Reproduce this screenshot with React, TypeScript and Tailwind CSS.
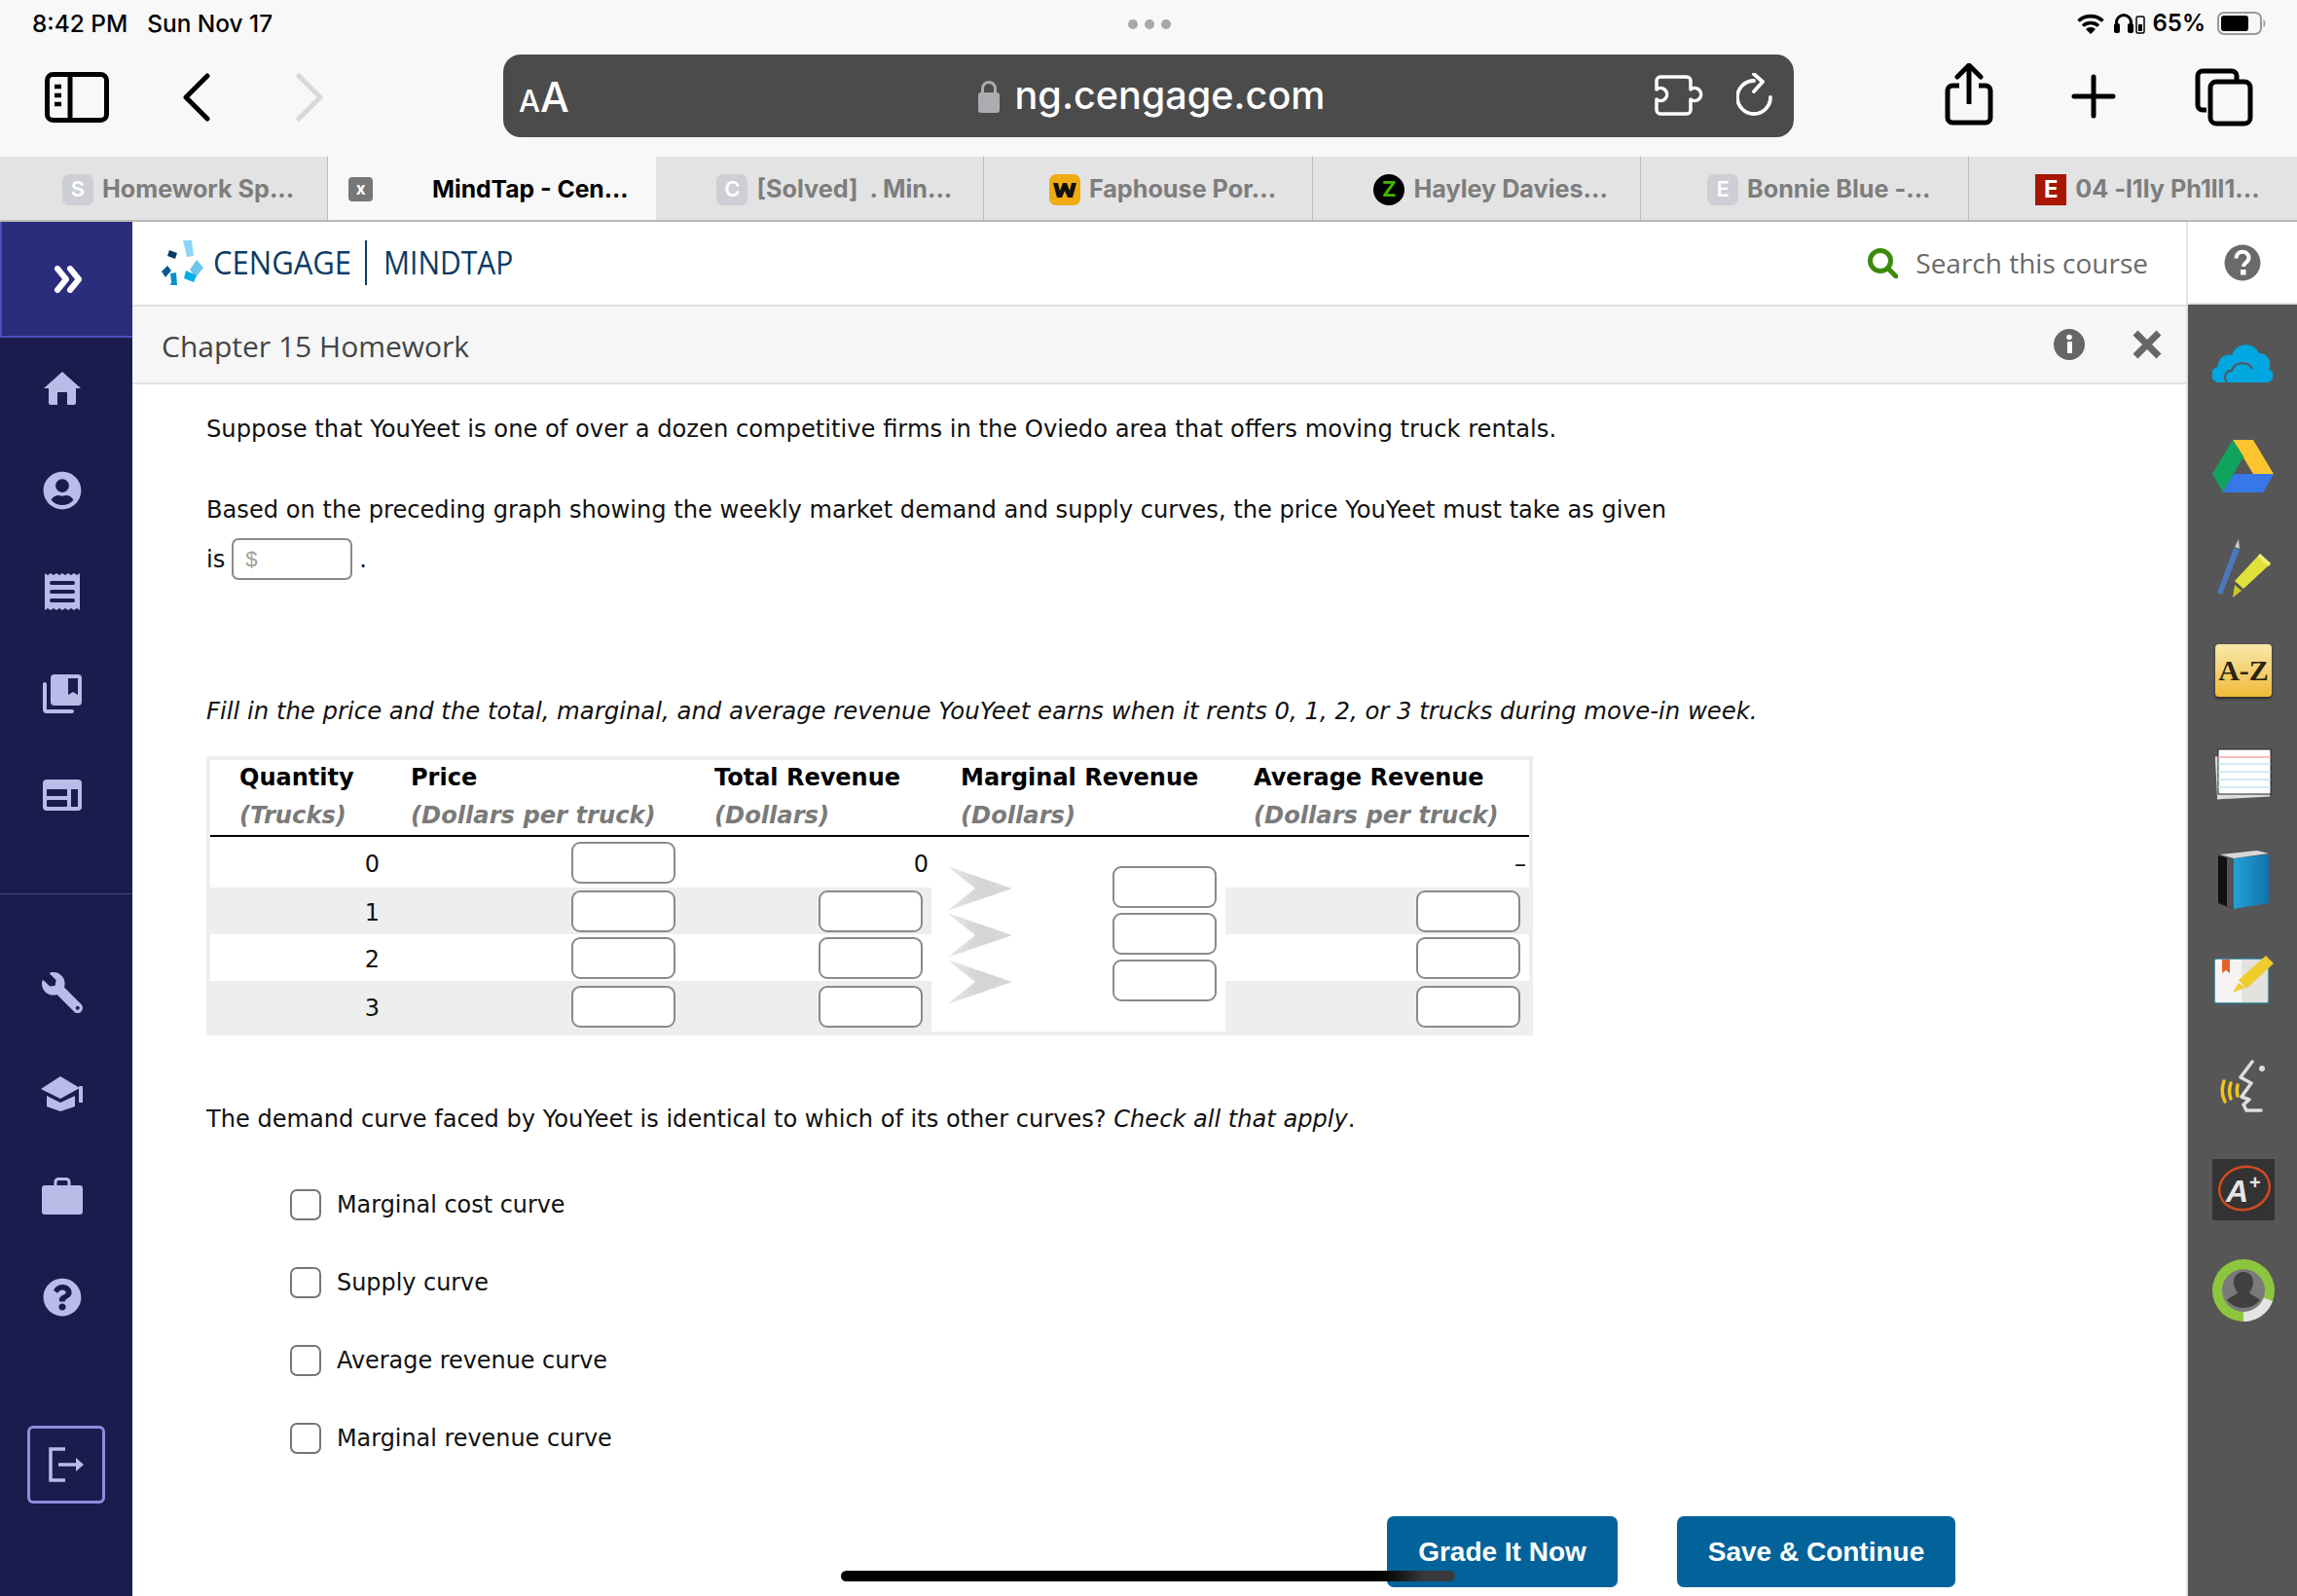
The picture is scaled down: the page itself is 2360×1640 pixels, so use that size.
import { FC, ReactNode } from 'react';
import { FaQuestionCircle, FaUserCircle, FaWrench } from 'react-icons/fa';

const tabs = [
  { title: 'Homework Sp...', letter: 'S', kind: 'plain' },
  { title: 'MindTap - Cen...', letter: '', kind: 'active' },
  { title: '[Solved]  . Min...', letter: 'C', kind: 'plain' },
  { title: 'Faphouse Por...', letter: '', kind: 'crown' },
  { title: 'Hayley Davies...', letter: 'Z', kind: 'zed' },
  { title: 'Bonnie Blue -...', letter: 'E', kind: 'plain' },
  { title: '04 -l1ly Ph1ll1...', letter: 'E', kind: 'red' },
];

const Favicon: FC<{ kind: string; letter: string }> = ({ kind, letter }) => {
  if (kind === 'crown') {
    return (
      <svg width="32" height="32" viewBox="0 0 32 32" className="shrink-0">
        <rect width="32" height="32" rx="7" fill="#eeab12" />
        <path d="M4 9h5l2 8 3-8h4l3 8 2-8h5l-4 15h-5l-3-7-3 7H8z" fill="#111" />
      </svg>
    );
  }
  if (kind === 'zed') {
    return <span className="w-[32px] h-[32px] rounded-full bg-black flex items-center justify-center text-[#45b300] text-[22px] font-bold shrink-0">{letter}</span>;
  }
  if (kind === 'red') {
    return <span className="w-[32px] h-[32px] bg-[#a81500] flex items-center justify-center text-white text-[24px] font-bold shrink-0">{letter}</span>;
  }
  return <span className="w-[32px] h-[32px] rounded-[7px] bg-[#cdced6] flex items-center justify-center text-white text-[22px] font-semibold shrink-0">{letter}</span>;
};

const TabBar: FC = () => (
  <div className="grid grid-cols-7 h-[67px] border-b-2 border-[#b8b8b8] font-['Inter',sans-serif] text-[25.2px] font-bold">
    {tabs.map((t) =>
      t.kind === 'active' ? (
        <div key={t.title} className="relative bg-[#f8f8f8] flex items-center justify-center text-black text-[24.7px] pl-[78px] pt-[2px]">
          <span className="absolute left-[21px] top-[21px] w-[25px] h-[25px] rounded-[4px] bg-[#777] text-white text-[17px] flex items-center justify-center">x</span>
          <span className="whitespace-pre">{t.title}</span>
        </div>
      ) : (
        <div key={t.title} className="bg-[#e3e3e3] border-r border-[#bcbcbc] last:border-r-0 flex items-center justify-center gap-[9px] pl-[30px] pt-[2px] text-[#7d7d7d]">
          <Favicon kind={t.kind} letter={t.letter} />
          <span className="whitespace-pre">{t.title}</span>
        </div>
      ),
    )}
  </div>
);

const StatusBar: FC = () => (
  <div className="relative h-[48px] flex items-center justify-between pl-[33px] pr-[31px] font-['Inter',sans-serif] text-[24.4px] font-medium text-black">
    <div className="flex gap-[20px]">
      <span>8:42 PM</span>
      <span>Sun Nov 17</span>
    </div>
    <div className="absolute left-[1159px] top-[20px] flex gap-[7px]">
      <span className="w-[10px] h-[10px] rounded-full bg-[#a8a8a8]" />
      <span className="w-[10px] h-[10px] rounded-full bg-[#a8a8a8]" />
      <span className="w-[10px] h-[10px] rounded-full bg-[#a8a8a8]" />
    </div>
    <div className="flex items-center">
      <svg width="28" height="21" viewBox="0 0 28 21" fill="none" stroke="#000" strokeWidth="3.600">
        <path d="M1.500 7.500c7-6.500 18-6.500 25 0M6 12.500c4.500-4 11.500-4 16 0" />
        <path d="M14 14a6 6 0 0 1 5 2l-5 5-5-5a6 6 0 0 1 5-2z" fill="#000" stroke="none" />
      </svg>
      <svg width="32" height="22" viewBox="0 0 32 22" fill="none" stroke="#000" className="ml-[10px]">
        <path d="M2.500 19V10a7.500 7.500 0 0 1 15 0v9" strokeWidth="3" />
        <rect x="0" y="11" width="6" height="10" rx="2" fill="#000" stroke="none" />
        <rect x="14" y="11" width="6" height="10" rx="2" fill="#000" stroke="none" />
        <rect x="23" y="4" width="8" height="17" rx="1.500" strokeWidth="1.500" />
        <rect x="25" y="12" width="4" height="7" fill="#000" stroke="none" />
      </svg>
      <span className="ml-[7px] font-semibold text-[24px]">65%</span>
      <svg width="51" height="24" viewBox="0 0 51 24" className="ml-[12px]">
        <rect x="1" y="1" width="44" height="22" rx="6" fill="none" stroke="#9a9a9a" strokeWidth="2" />
        <rect x="4" y="4" width="28" height="16" rx="3" fill="#000" />
        <path d="M47.500 8c2.500 1 2.500 7 0 8z" fill="#9a9a9a" />
      </svg>
    </div>
  </div>
);

const Toolbar: FC = () => (
  <div className="h-[113px] flex items-start">
    <div className="w-[517px] h-full relative">
      <svg width="66" height="52" viewBox="0 0 66 52" fill="none" stroke="#000" strokeWidth="5" className="absolute left-[46px] top-[26px]">
        <rect x="2.500" y="2.500" width="61" height="47" rx="6" />
        <path d="M26 3v46" />
        <path d="M10 15h7M10 24h7M10 33h7" strokeWidth="4.500" />
      </svg>
      <svg width="32" height="50" viewBox="0 0 32 50" fill="none" stroke="#000" strokeWidth="5" strokeLinecap="round" strokeLinejoin="round" className="absolute left-[186px] top-[27px]">
        <path d="M27 3L5 25l22 22" />
      </svg>
      <svg width="32" height="50" viewBox="0 0 32 50" fill="none" stroke="#d8d8d8" strokeWidth="5" strokeLinecap="round" strokeLinejoin="round" className="absolute left-[302px] top-[27px]">
        <path d="M5 3l22 22L5 47" />
      </svg>
    </div>
    <div className="relative mt-[8px] w-[1326px] h-[85px] rounded-[18px] bg-[#4b4b4b] text-white font-['Inter',sans-serif] flex items-center justify-center pl-[5px]">
      <span className="absolute left-[16px] top-[23px] font-medium leading-none flex items-baseline">
        <span className="text-[31px]">A</span>
        <span className="text-[42px]">A</span>
      </span>
      <svg width="24" height="34" viewBox="0 0 24 34" className="mr-[15px]">
        <rect x="1" y="13" width="22" height="21" rx="3" fill="#acacb0" />
        <path d="M5.500 14V9a6.500 6.500 0 0 1 13 0v5" fill="none" stroke="#acacb0" strokeWidth="3" />
      </svg>
      <span className="text-[39.6px] font-medium leading-none">ng.cengage.com</span>
      <svg width="54" height="42" viewBox="0 0 54 42" fill="none" stroke="#fff" strokeWidth="3.500" strokeLinejoin="round" className="absolute left-[1183px] top-[21px]">
        <path d="M6 2h27a4 4 0 0 1 4 4v9a6.500 6.500 0 1 1 0 10v11a4 4 0 0 1-4 4H6a4 4 0 0 1-4-4V25a6.500 6.500 0 1 0 0-10V6a4 4 0 0 1 4-4z" />
      </svg>
      <svg width="40" height="46" viewBox="0 0 40 46" fill="none" stroke="#fff" strokeWidth="3.800" strokeLinecap="round" strokeLinejoin="round" className="absolute left-[1267px] top-[19px]">
        <path d="M18 8A17 17 0 1 0 35 25" />
        <path d="M18 1l9 8-9 10" />
      </svg>
    </div>
    <div className="flex-1 h-full relative">
      <svg width="50" height="64" viewBox="0 0 50 64" fill="none" stroke="#000" strokeWidth="5" strokeLinejoin="round" className="absolute left-[155px] top-[17px]">
        <path d="M15 23H8a5 5 0 0 0-5 5v28a5 5 0 0 0 5 5h34a5 5 0 0 0 5-5V28a5 5 0 0 0-5-5h-7" />
        <path d="M25 42V4" />
        <path d="M13 14L25 2l12 12" strokeLinecap="round" />
      </svg>
      <svg width="46" height="46" viewBox="0 0 46 46" fill="none" stroke="#000" strokeWidth="5" strokeLinecap="round" className="absolute left-[285px] top-[28px]">
        <path d="M23 3v40M3 23h40" />
      </svg>
      <svg width="60" height="60" viewBox="0 0 60 60" fill="none" stroke="#000" strokeWidth="5" className="absolute left-[412px] top-[22px]">
        <path d="M12 43H8a5 5 0 0 1-5-5V8a5 5 0 0 1 5-5h30a5 5 0 0 1 5 5v5" />
        <rect x="16" y="14" width="41" height="43" rx="6" />
      </svg>
    </div>
  </div>
);

const ReceiptIcon = () => (
  <svg width="38" height="40" viewBox="0 0 38 40">
    <path d="M1 1l3 2 3-2 3 2 3-2 3 2 3-2 3 2 3-2 3 2 3-2 3 2 3-2v38l-3-2-3 2-3-2-3 2-3-2-3 2-3-2-3 2-3-2-3 2-3-2-3 2z" fill="#b9bce6" />
    <path d="M8 11h22M8 20h22M8 29h22" stroke="#1a1c4e" strokeWidth="4" strokeLinecap="round" />
  </svg>
);

const HomeIcon = () => (
  <svg width="38" height="34" viewBox="0 0 38 34">
    <path d="M19 0L38 17h-5v15a2 2 0 0 1-2 2h-7V21H14v13H7a2 2 0 0 1-2-2V17H0z" fill="#b9bce6" />
  </svg>
);

const BooksIcon = () => (
  <svg width="40" height="40" viewBox="0 0 40 40">
    <path d="M2 10v26a2 2 0 0 0 2 2h26" fill="none" stroke="#b9bce6" strokeWidth="4" strokeLinecap="round" />
    <rect x="8" width="32" height="32" rx="4" fill="#b9bce6" />
    <path d="M26 4h10v17l-5-3-5 3z" fill="#1a1c4e" />
  </svg>
);

const PanelIcon = () => (
  <svg width="40" height="32" viewBox="0 0 40 32">
    <rect width="40" height="32" rx="4" fill="#b9bce6" />
    <rect x="4" y="10" width="21" height="7" fill="#1a1c4e" />
    <rect x="4" y="21" width="21" height="7" rx="1" fill="#1a1c4e" />
    <rect x="29" y="10" width="7" height="18" fill="#1a1c4e" />
  </svg>
);

const CapIcon = () => (
  <svg width="44" height="36" viewBox="0 0 44 36" fill="#b9bce6">
    <path d="M20 0l20 12-20 11L0 13z" />
    <path d="M6 20l14 7 15-7v11l-15 5-14-5z" />
    <rect x="39" y="10" width="4" height="17" rx="1" />
  </svg>
);

const BriefcaseIcon = () => (
  <svg width="42" height="38" viewBox="0 0 42 38">
    <rect x="14" y="1.500" width="14" height="9" rx="3" fill="none" stroke="#b9bce6" strokeWidth="3" />
    <rect y="8" width="42" height="30" rx="3" fill="#b9bce6" />
  </svg>
);

const Sidebar: FC = () => (
  <div className="w-[136px] shrink-0 bg-[#1a1c4e] flex flex-col text-[#b9bce6]">
    <div className="h-[119px] bg-[#2a2c7c] border-l-2 border-b-2 border-[#4a50c2] flex items-center justify-center pl-[2px]">
      <svg width="30" height="28" viewBox="0 0 30 28" fill="none" stroke="#fff" strokeWidth="6" strokeLinecap="round" strokeLinejoin="round">
        <path d="M4 3l9 11-9 11M17 3l9 11-9 11" />
      </svg>
    </div>
    <div className="flex flex-col pr-[8px] pb-[48px]">
      <div className="h-[104.5px] flex items-center justify-center"><HomeIcon /></div>
      <div className="h-[104.5px] flex items-center justify-center"><FaUserCircle size={40} /></div>
      <div className="h-[104.5px] flex items-center justify-center"><ReceiptIcon /></div>
      <div className="h-[104.5px] flex items-center justify-center"><BooksIcon /></div>
      <div className="h-[104.5px] flex items-center justify-center"><PanelIcon /></div>
    </div>
    <div className="h-px bg-[#45477a]" />
    <div className="flex flex-col pt-[49px] pr-[8px]">
      <div className="h-[104.5px] flex items-center justify-center"><FaWrench size={42} className="-scale-x-100" /></div>
      <div className="h-[104.5px] flex items-center justify-center"><CapIcon /></div>
      <div className="h-[104.5px] flex items-center justify-center"><BriefcaseIcon /></div>
      <div className="h-[104.5px] flex items-center justify-center"><FaQuestionCircle size={40} /></div>
    </div>
    <div className="mt-[79px] ml-[28px] w-[80px] h-[80px] rounded-[6px] border-[3px] border-[#8a8fdc] flex items-center justify-center">
      <svg width="38" height="36" viewBox="0 0 38 36" fill="none" stroke="#b9bce6" strokeWidth="3.500">
        <path d="M18 2H3v32h15" />
        <path d="M11 18h20" />
        <path d="M29 11l8 7-8 7z" fill="#b9bce6" stroke="none" />
      </svg>
    </div>
  </div>
);

const CengageLogo = () => (
  <svg width="46" height="46" viewBox="0 0 46 46">
    <polygon points="22,0 31,0 33,16 26,17" fill="#8ed6f7" />
    <polygon points="8,10 16,13 14,19 6,16" fill="#0a3b66" />
    <polygon points="36,20 43,28 35,38 29,30" fill="#6cc5ea" />
    <polygon points="0,32 6,26 10,31 4,38" fill="#0a5c8f" />
    <polygon points="10,43 9,46 16,46 15,33 9,34" fill="#0a8fd0" />
    <polygon points="25,31 36,36 33,43 23,39" fill="#00aee6" />
  </svg>
);

const Header: FC = () => (
  <div className="h-[87px] pb-[2px] bg-white flex items-center border-b-2 border-[#e2e2e2]">
    <div className="ml-[30px] flex items-center">
      <CengageLogo />
      <span className="ml-[7px] text-[#0b3b66] text-[33px] font-['Open_Sans',sans-serif] leading-none scale-x-[0.94] origin-left w-[156px]">CENGAGE</span>
      <span className="w-[2px] h-[46px] bg-[#0b3b66]" />
      <span className="ml-[17px] text-[#0b3b66] text-[33px] font-['Open_Sans',sans-serif] leading-none scale-x-[0.91] origin-left">MINDTAP</span>
    </div>
    <div className="ml-auto mr-[39px] flex items-center gap-[18px]">
      <svg width="32" height="32" viewBox="0 0 32 32" fill="none" stroke="#3b8a0c" strokeWidth="5">
        <circle cx="14" cy="14" r="10.500" />
        <path d="M21.500 21.500L30 30" strokeLinecap="round" />
      </svg>
      <span className="font-['Open_Sans',sans-serif] text-[28px] text-[#6a6a6a]">Search this course</span>
    </div>
  </div>
);

const TitleBar: FC = () => (
  <div className="h-[80px] bg-[#f6f6f6] border-b-2 border-[#e2e2e2] flex items-center pl-[30px] font-['Open_Sans',sans-serif] text-[#454545] text-[30px]">
    <span className="mt-[3px]">Chapter 15 Homework</span>
    <svg width="32" height="32" viewBox="0 0 32 32" className="ml-auto">
      <circle cx="16" cy="16" r="16" fill="#666" />
      <rect x="14" y="13" width="5" height="12" fill="#fff" />
      <circle cx="16" cy="8.500" r="2.800" fill="#fff" />
    </svg>
    <svg width="30" height="30" viewBox="0 0 30 30" stroke="#666" strokeWidth="7" className="ml-[49px] mr-[25px]">
      <path d="M3 3l24 24M27 3L3 27" />
    </svg>
  </div>
);

const Box: FC<{ className?: string }> = ({ className = '' }) => (
  <span className={`block w-[107px] h-[43px] bg-white rounded-[9px] border-2 border-[#8a8a8a] ${className}`} />
);

const headCols = [
  ['Quantity', '(Trucks)'],
  ['Price', '(Dollars per truck)'],
  ['Total Revenue', '(Dollars)'],
  ['Marginal Revenue', '(Dollars)'],
  ['Average Revenue', '(Dollars per truck)'],
];

const rows = [
  { q: '0', h: 'h-[52px]', bg: 'bg-white', total: '0', avg: '–' },
  { q: '1', h: 'h-[48px]', bg: 'bg-[#eeeeee]' },
  { q: '2', h: 'h-[48px]', bg: 'bg-white' },
  { q: '3', h: 'h-[52px]', bg: 'bg-[#eeeeee]' },
];

const RevenueTable: FC = () => (
  <div className="w-[1363px] border-4 border-[#eeeeee] bg-[#eeeeee]">
    <div className="grid grid-cols-[176px_312px_253px_301px_283px] h-[79px] bg-white border-b-2 border-black pl-[30px]">
      {headCols.map(([a, b]) => (
        <div key={a} className="flex flex-col leading-[38px]">
          <span className="font-bold text-black text-[24px] whitespace-nowrap -mt-[1px]">{a}</span>
          <span className="font-bold italic text-[#7a7a7a] text-[24.2px] whitespace-nowrap mt-[1px]">{b}</span>
        </div>
      ))}
    </div>
    <div className="flex">
      <div className="w-[741px]">
        {rows.map((r, i) => (
          <div key={r.q} className={`${r.h} ${r.bg} flex items-center`}>
            <span className="w-[174px] text-right text-[#111] text-[24px] mt-[4px]">{r.q}</span>
            <Box className="ml-[197px]" />
            <div className="ml-auto w-[258px] flex justify-end pr-[3px]">
              {i === 0 ? <span className="text-[#111] text-[24px] mt-[4px]">{r.total}</span> : <Box className="mr-[6px]" />}
            </div>
          </div>
        ))}
      </div>
      <div className="w-[302px] bg-white flex pl-[16px] pt-[30px]">
        <div className="flex flex-col gap-[2px]">
          {[0, 1, 2].map((a) => (
            <svg key={a} width="68" height="46" viewBox="0 0 68 46">
              <defs>
                <linearGradient id={`arrow${a}`} x1="0" x2="1" y1="0" y2="0">
                  <stop offset="0" stopColor="#e8e8e8" />
                  <stop offset="0.5" stopColor="#d4d4d4" />
                  <stop offset="1" stopColor="#d8d8d8" />
                </linearGradient>
              </defs>
              <path d="M0 0L67 23 0 46 29 23z" fill={`url(#arrow${a})`} />
            </svg>
          ))}
        </div>
        <div className="ml-[102px] flex flex-col gap-[5px]">
          <Box />
          <Box />
          <Box />
        </div>
      </div>
      <div className="flex-1">
        {rows.map((r, i) => (
          <div key={r.q} className={`${r.h} ${r.bg} flex items-center justify-end ${i === 0 ? 'pr-[3px]' : 'pr-[9px]'}`}>
            {i === 0 ? <span className="text-[#111] text-[24px] mt-[4px]">{r.avg}</span> : <Box />}
          </div>
        ))}
      </div>
    </div>
  </div>
);

const CheckRow: FC<{ children: ReactNode }> = ({ children }) => (
  <div className="h-[80px] flex items-center gap-[16px] pl-[86px] text-[23.9px]">
    <span className="w-[32px] h-[32px] rounded-[7px] border-2 border-[#777] bg-white" />
    <span>{children}</span>
  </div>
);

const Body: FC = () => (
  <div className="pl-[76px] pt-[30px] font-['DejaVu_Sans',sans-serif] text-[24.2px] leading-[32px] text-[#111]">
    <p>Suppose that YouYeet is one of over a dozen competitive firms in the Oviedo area that offers moving truck rentals.</p>
    <p className="mt-[51px] text-[24.13px]">Based on the preceding graph showing the weekly market demand and supply curves, the price YouYeet must take as given</p>
    <div className="mt-[13px] flex items-center h-[43px]">
      <span>is</span>
      <span className="ml-[7px] w-[124px] h-[43px] rounded-[7px] border-2 border-[#8a8a8a] flex items-center pl-[12px] font-['Liberation_Sans',sans-serif] text-[22px] text-[#a0a0a0]">$</span>
      <span className="ml-[7px]">.</span>
    </div>
    <p className="mt-[119px] italic text-[24.34px]">Fill in the price and the total, marginal, and average revenue YouYeet earns when it rents 0, 1, 2, or 3 trucks during move-in week.</p>
    <div className="mt-[30px]">
      <RevenueTable />
    </div>
    <p className="mt-[70px] text-[24.1px]">The demand curve faced by YouYeet is identical to which of its other curves? <em>Check all that apply</em>.</p>
    <div className="mt-[32px]">
      <CheckRow>Marginal cost curve</CheckRow>
      <CheckRow>Supply curve</CheckRow>
      <CheckRow>Average revenue curve</CheckRow>
      <CheckRow>Marginal revenue curve</CheckRow>
    </div>
    <div className="mt-[40px] flex justify-end gap-[61px] pr-[237px] font-['Liberation_Sans',sans-serif] font-bold text-[28px] text-white">
      <button className="w-[237px] h-[73px] rounded-[7px] bg-[#02639b]">Grade It Now</button>
      <button className="w-[286px] h-[73px] rounded-[7px] bg-[#02639b]">Save &amp; Continue</button>
    </div>
  </div>
);

const railIcons: ReactNode[] = [
  <svg key="cloud" width="64" height="40" viewBox="0 0 64 40">
    <path d="M8 40a8 8 0 0 1-2-16 11 11 0 0 1 14-12 15 15 0 0 1 28-2 11 11 0 0 1 10 16 7.500 7.500 0 0 1-1 14z" fill="#00a7e1" />
    <path d="M15 40c-5-6 0-13 5-12 2-9 17-11 21-2" fill="none" stroke="#565656" strokeWidth="2" />
  </svg>,
  <svg key="drive" width="64" height="54" viewBox="0 0 64 54" className="translate-y-[1px]">
    <polygon points="21,0 42,0 63,35 42,35" fill="#fcc52f" />
    <polygon points="21,0 0,35 11,54 32,17" fill="#0fa35e" />
    <polygon points="11,54 22,35 63,35 52,54" fill="#3777e8" />
  </svg>,
  <svg key="pens" width="58" height="62" viewBox="0 0 58 62">
    <path d="M2 56L19 10l6 2L7 58z" fill="#4a78bd" />
    <path d="M20 9l4-8 1 10z" fill="#c8c8c8" />
    <path d="M20 44L46 16l11 10-28 26z" fill="#dfe23a" />
    <path d="M46 16l11 10-2 3-11-10z" fill="#f0f27a" />
    <path d="M20 48l7 6-9 7z" fill="#c9c92a" />
  </svg>,
  <div key="az" className="w-[58px] h-[54px] rounded-[4px] bg-gradient-to-b from-[#f9e8a8] to-[#efbb30] shadow-[0_2px_3px_rgba(0,0,0,0.5)] flex items-center justify-center font-['Liberation_Serif',serif] font-bold text-[30px] text-[#2d2410] leading-none">A-Z</div>,
  <svg key="cards" width="58" height="54" viewBox="0 0 58 54" className="translate-y-[1px]">
    <rect x="1" y="7" width="54" height="44" fill="#ddd" transform="rotate(-3 28 30)" />
    <rect x="3" y="1" width="54" height="46" fill="#fff" stroke="#222" strokeWidth="1" />
    <path d="M3 9h54" stroke="#f3a6a6" strokeWidth="1.500" />
    <path d="M3 16h54M3 24h54M3 32h54M3 40h54" stroke="#bfe4f6" strokeWidth="1.500" />
  </svg>,
  <svg key="book" width="52" height="60" viewBox="0 0 52 60" className="translate-y-[4px]">
    <defs>
      <linearGradient id="bk" x1="0" x2="1" y1="0" y2="0">
        <stop offset="0" stopColor="#25a0d8" />
        <stop offset="1" stopColor="#0f74ab" />
      </linearGradient>
    </defs>
    <path d="M0 5l16 4v51L0 54z" fill="#111" />
    <path d="M9 7l7 1v52l-7-3z" fill="#555" />
    <path d="M16 8l36-4v50l-36 6z" fill="url(#bk)" />
    <path d="M2 4l38-4 12 3-36 5z" fill="#d8d8d8" />
  </svg>,
  <svg key="note" width="62" height="50" viewBox="0 0 62 50" className="translate-y-[1px]">
    <rect x="1" y="3" width="56" height="46" rx="2" fill="#f5f4f2" stroke="#2a7088" strokeWidth="1.500" />
    <rect x="29" y="4" width="27" height="44" fill="#e2e2de" />
    <path d="M9 4h8v14l-4-3-4 3z" fill="#e2622c" />
    <path d="M26 25L54 0l8 8-28 26z" fill="#f0cb2c" />
    <path d="M26 28l6 5-12 5z" fill="#f0cb2c" />
  </svg>,
  <svg key="speak" width="50" height="56" viewBox="0 0 50 56" fill="none" strokeLinecap="round" strokeLinejoin="round" className="translate-y-[6px]">
    <path d="M5 22c-3 8-2 15 1 21M12 24c-2 6-2 11 0 16M19 26c-1 4-1 7 0 11" stroke="#eec51d" strokeWidth="3.500" />
    <path d="M34 2L22 18l11 6-10 14 8 3-6 5 3 6h15" stroke="#dedede" strokeWidth="3.500" />
    <circle cx="44" cy="9" r="3" fill="#dedede" />
  </svg>,
  <svg key="aplus" width="64" height="63" viewBox="0 0 64 63" className="translate-y-[6px]">
    <rect width="64" height="63" fill="#333" />
    <ellipse cx="33" cy="30" rx="26" ry="22" fill="none" stroke="#d24a21" strokeWidth="2.500" transform="rotate(-15 33 30)" />
    <text x="14" y="44" fontFamily="Liberation Sans, sans-serif" fontStyle="italic" fontWeight="bold" fontSize="32" fill="#e6e6e6">A</text>
    <text x="38" y="31" fontFamily="Liberation Sans, sans-serif" fontWeight="bold" fontSize="20" fill="#e6e6e6">+</text>
  </svg>,
  <svg key="avatar" width="64" height="64" viewBox="0 0 64 64" className="translate-y-[4px]">
    <circle cx="32" cy="32" r="32" fill="#8cc63f" />
    <path d="M32 64a32 32 0 0 0 30-21l-11-4a20 20 0 0 1-19 13z" fill="#e4e4e4" />
    <circle cx="32" cy="32" r="22" fill="#7a7a7a" />
    <path d="M32 13c7 0 10 5 10 11 0 4-2 8-4 10 1 3 8 4 11 8a22 22 0 0 1-34 0c3-4 10-5 11-8-2-2-4-6-4-10 0-6 3-11 10-11z" fill="#404040" />
  </svg>,
];

const Rail: FC = () => (
  <div className="w-[112px] shrink-0 flex flex-col">
    <div className="h-[85px] bg-white border-b-2 border-[#e2e2e2] flex items-center justify-center">
      <svg width="38" height="38" viewBox="0 0 38 38">
        <circle cx="19" cy="19" r="18.500" fill="#6a6a6a" />
        <path d="M12.500 14.500c0-9 13-9 13-.5 0 5-5.500 4.500-5.500 9" fill="none" stroke="#fff" strokeWidth="4" />
        <rect x="17" y="26" width="5.500" height="5.500" fill="#fff" />
      </svg>
    </div>
    <div className="flex-1 bg-[#565656] flex flex-col pt-[7px]">
      {railIcons.map((icon, i) => (
        <div key={i} className="h-[105.5px] flex items-center justify-center pl-[2px]">{icon}</div>
      ))}
    </div>
  </div>
);

export default function App() {
  return (
    <div className="relative w-[2360px] h-[1640px] overflow-hidden bg-[#f8f8f8] flex flex-col">
      <StatusBar />
      <Toolbar />
      <TabBar />
      <div className="flex flex-1 bg-white min-h-0">
        <Sidebar />
        <div className="flex-1 border-r-2 border-[#e2e2e2] min-w-0 bg-white">
          <Header />
          <TitleBar />
          <Body />
        </div>
        <Rail />
      </div>
      <div className="absolute left-[864px] top-[1614px] w-[631px] h-[11px] rounded-full bg-gradient-to-r from-black from-[85%] to-[#3a3a3a] to-[95%]" />
    </div>
  );
}
